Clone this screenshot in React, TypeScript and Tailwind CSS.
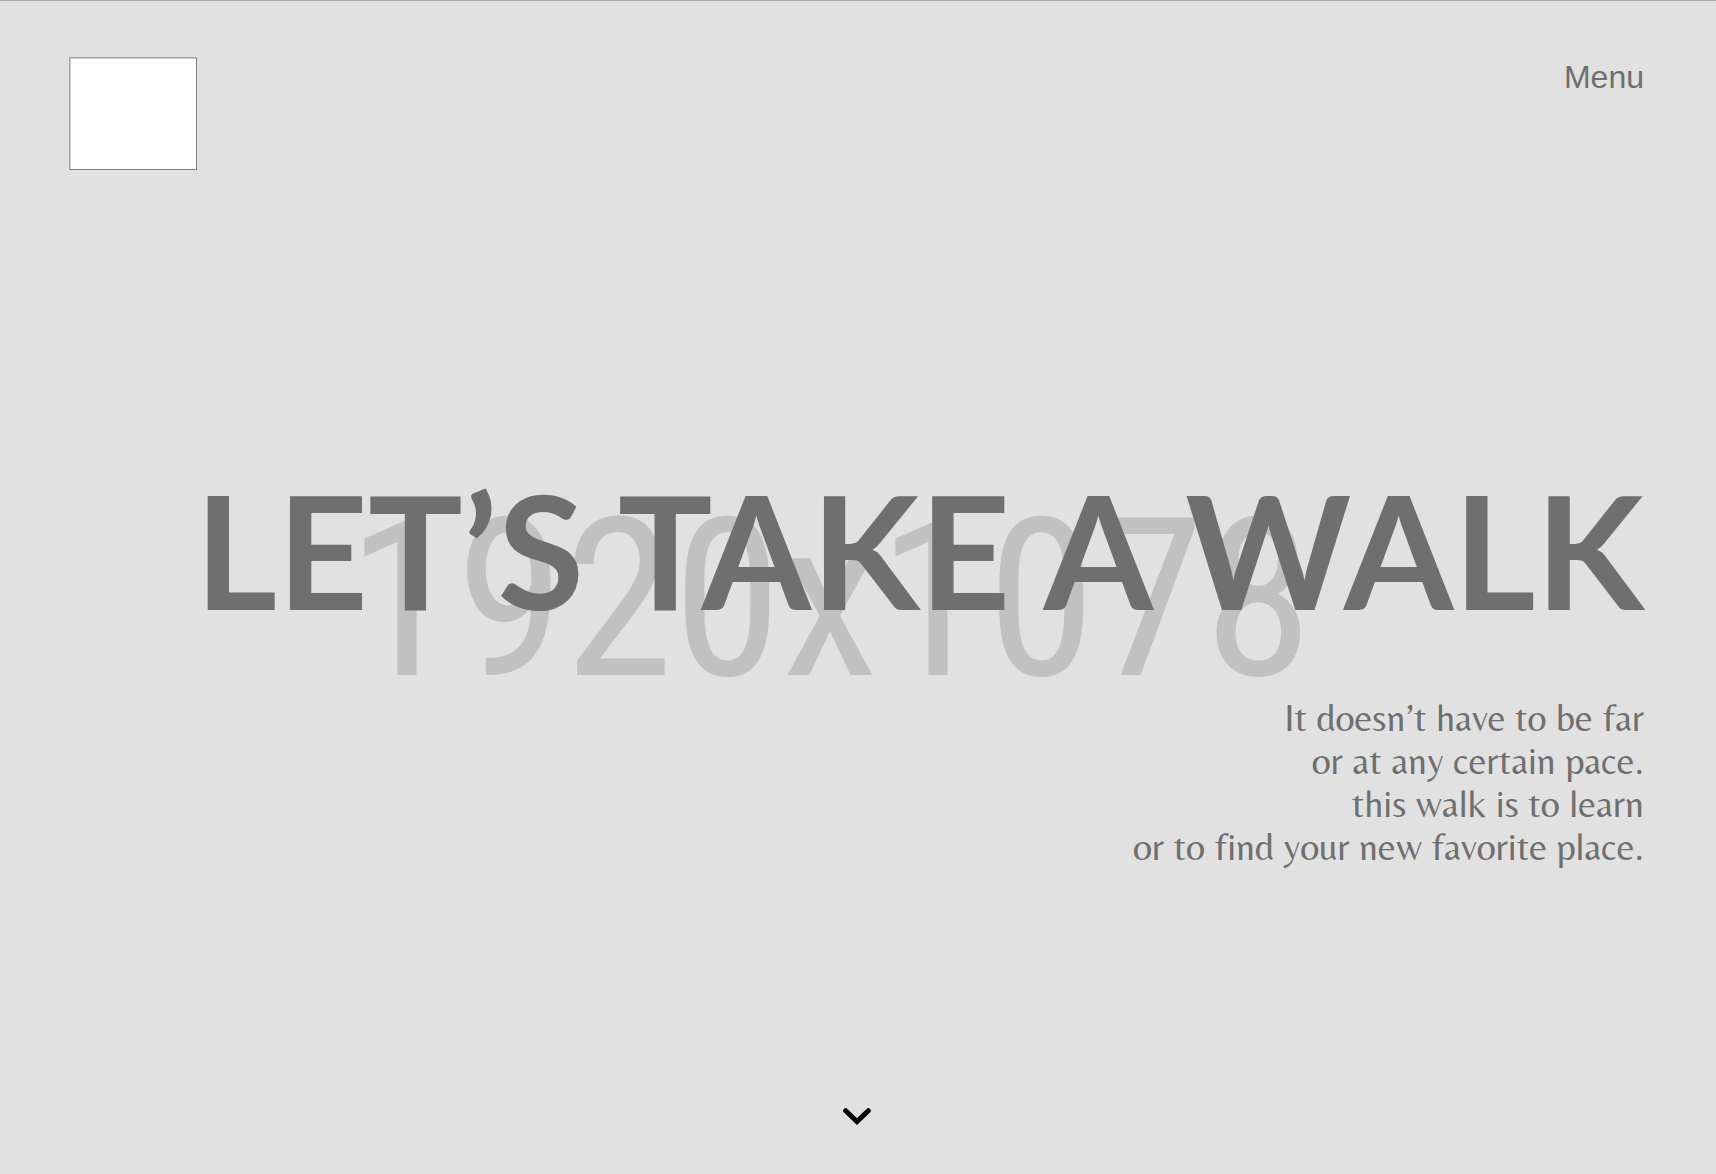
import React from 'react';

export default function App() {
  return (
    <div className="relative isolate flex min-h-screen flex-col border-t border-[#ababab] bg-[#e1e1e1] text-[#6f6f6f]">
      <div className="absolute inset-0 -z-10 flex items-center justify-center overflow-hidden pr-14 pt-6 font-['Roboto_Condensed','Liberation_Sans',sans-serif] text-[220px] leading-none text-[#c1c1c1]">
        <span>1920x1078</span>
      </div>

      <header className="flex items-start justify-between pl-[69px] pr-[72px] pt-14">
        <a
          href="#home"
          aria-label="Home"
          className="block h-[113px] w-32 border border-b-[#808080] border-l-[#a6a6a6] border-r-[#808080] border-t-[#a6a6a6] bg-white shadow-[inset_1px_1px_0_#c8c8c8]"
        />
        <button
          type="button"
          className="font-['Liberation_Sans',Arial,sans-serif] text-[32px] leading-10"
        >
          Menu
        </button>
      </header>

      <main className="flex flex-1 flex-col items-end pl-6 pr-[72px] pt-[285px] text-right">
        <h1 className="font-['Lato',sans-serif] text-[158px] font-bold leading-[188px]">
          LET’S TAKE A WALK
        </h1>
        <p className="mt-[54px] font-['Belleza','Lato',sans-serif] text-[38px] leading-[43px]">
          It doesn’t have to be far
          <br />
          or at any certain pace.
          <br />
          this walk is to learn
          <br />
          or to find your new favorite place.
        </p>
      </main>

      <div className="flex justify-center pb-12 pr-0.5">
        <a href="#next" aria-label="Scroll down" className="block text-black">
          <svg
            width="28"
            height="18"
            viewBox="0 0 28 18"
            fill="none"
            stroke="currentColor"
            strokeWidth="5"
            strokeLinecap="round"
          >
            <path d="M2.7 2.7 14 13.6 25.3 2.7" />
          </svg>
        </a>
      </div>
    </div>
  );
}
